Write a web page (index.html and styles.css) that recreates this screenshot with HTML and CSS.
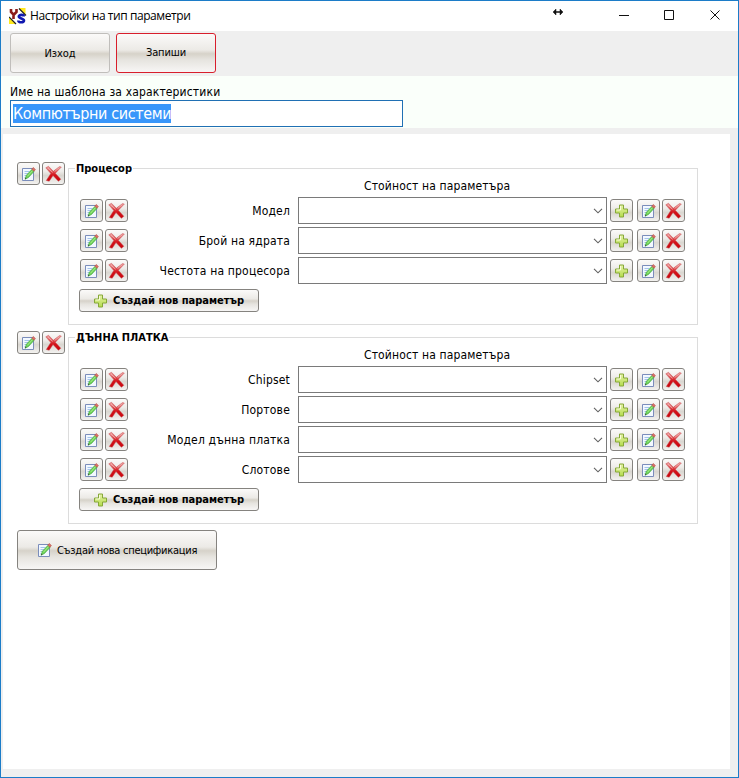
FILE: index.html
```html
<!DOCTYPE html>
<html lang="bg">
<head>
<meta charset="utf-8">
<title>Настройки на тип параметри</title>
<link rel="stylesheet" href="styles.css">
</head>
<body>
<svg class="defs" width="0" height="0">
  <defs>
    <linearGradient id="redFill" x1="0" y1="0" x2="0" y2="1"><stop offset="0" stop-color="#f0aaaa"/><stop offset=".4" stop-color="#dc3c40"/><stop offset=".6" stop-color="#d3121a"/><stop offset="1" stop-color="#c8050d"/></linearGradient>
    <linearGradient id="greenFill" x1="0" y1="0" x2="0" y2="1"><stop offset="0" stop-color="#e6f2a8"/><stop offset="1" stop-color="#b4dc4c"/></linearGradient>
    <symbol id="edit" viewBox="0 0 16 16">
      <path d="M1.500 2.500h11v12h-11z" fill="#f2f8ff" stroke="#7b8dbb"/>
      <path d="M3.500 5.500h5M3.500 7.500h4M3.500 9.500h3M3.500 11.500h2" stroke="#a4c3ea"/>
      <path d="M4 13.300l1.300-4L11 3.300l2.200 2-5.700 6.200z" fill="#66cf50" stroke="#4aa548" stroke-width=".6"/>
      <path d="M6.300 10.400l5.500-6" stroke="#b0ee96"/>
      <path d="M10.700 3.200l1.500-1.700 2.200 2L13 5.200z" fill="#dc7468" stroke="#b04a40" stroke-width=".6"/>
      <path d="M4 13.300l.5-1.600 1 .9z" fill="#333"/>
    </symbol>
    <symbol id="del" viewBox="0 0 18 18">
      <path d="M.8 2.800L3.500 1.300 8.300 6.300 14.500 1.600l1.800.5-6 6.200 5.500 6-2.400 2L8 10.500 4.200 16.200 1.300 15.500 5.800 8.500z" fill="url(#redFill)" stroke="#c4464a" stroke-width=".5"/>
      <path d="M2.800 3l4.800 4.300M14 2.800L9.500 6.700" stroke="#f3bcb9" stroke-width=".8"/>
    </symbol>
    <symbol id="plus" viewBox="0 0 14 14">
      <path d="M4.500 1h4v4h4v4h-4v4h-4V9h-4V5h4z" fill="url(#greenFill)" stroke="#86a838"/>
      <path d="M5.500 2v4h-4" fill="none" stroke="#f7fcd8"/>
    </symbol>
    <symbol id="chev" viewBox="0 0 10 6"><path d="M1 .8l4 4 4-4" fill="none" stroke="#606060" stroke-width="1.100"/></symbol>
  </defs>
</svg>
<div class="window">
  <header class="titlebar">
    <svg class="logo" width="18" height="17" viewBox="0 0 18 17">
      <path d="M10 0h6.500v7zM0 9l7 7H0z" fill="#ffe81e"/>
      <path d="M10 .5l7 7M0 9l7 7" stroke="#222" stroke-width="1.200"/>
      <path d="M2 1v3l2.500 2.500V11M7.500 1v3L5 6.500" fill="none" stroke="#8c1c1a" stroke-width="2.600"/>
      <path d="M14.800 8.500c0-2.200-5-2.200-5 0s5.200 1.700 5.200 4-5.700 2.500-5.700 0" fill="none" stroke="#1018b0" stroke-width="2.600"/>
    </svg>
    <span class="caption">Настройки на тип параметри</span>
    <svg class="resize" width="12" height="8" viewBox="0 0 12 8"><path d="M3 4h6" stroke="#111" stroke-width="1.500"/><path d="M1 4l3-3v6zM11 4L8 1v6z" fill="#111" stroke="#111" stroke-width=".5"/></svg>
    <svg class="controls" width="102" height="12" viewBox="0 0 102 12"><path d="M0 5.500h10M45.500 .5h9v9h-9zM91.500 .5l9 9M100.500 .5l-9 9" fill="none" stroke="#111" stroke-width="1"/></svg>
  </header>
  <div class="toolbar">
    <button class="btn tool">Изход</button>
    <button class="btn tool save">Запиши</button>
  </div>
  <div class="name">
    <label class="name-label">Име на шаблона за характеристики</label>
    <div class="name-input"><span class="selected">Компютърни системи</span></div>
  </div>
  <main class="sheet">
    <section class="group">
      <div class="pair"><button class="btn icon"><svg class="i16"><use href="#edit"/></svg></button><button class="btn icon"><svg class="i18"><use href="#del"/></svg></button></div>
      <fieldset>
        <legend>Процесор</legend>
        <div class="column-title">Стойност на параметъра</div>
        <div class="rows" data-labels="Модел|Брой на ядрата|Честота на процесора"></div>
        <button class="btn create"><svg class="i14"><use href="#plus"/></svg><span>Създай нов параметър</span></button>
      </fieldset>
    </section>
    <section class="group">
      <div class="pair"><button class="btn icon"><svg class="i16"><use href="#edit"/></svg></button><button class="btn icon"><svg class="i18"><use href="#del"/></svg></button></div>
      <fieldset>
        <legend>ДЪННА ПЛАТКА</legend>
        <div class="column-title">Стойност на параметъра</div>
        <div class="rows" data-labels="Chipset|Портове|Модел дънна платка|Слотове"></div>
        <button class="btn create"><svg class="i14"><use href="#plus"/></svg><span>Създай нов параметър</span></button>
      </fieldset>
    </section>
    <button class="btn spec"><svg class="i16"><use href="#edit"/></svg><span>Създай нова спецификация</span></button>
  </main>
</div>
<script src="script.js"></script>
</body>
</html>
```
FILE: script.js
```js
const iconButton = (name, size) =>
  `<button class="btn icon"><svg class="i${size}"><use href="#${name}"/></svg></button>`;
const pair = `<div class="pair">${iconButton('edit', 16)}${iconButton('del', 18)}</div>`;

document.querySelectorAll('.rows').forEach(list => {
  list.innerHTML = list.dataset.labels.split('|').map(label => `
    <div class="row">${pair}<span class="label">${label}</span>
      <div class="combo"><svg class="chev"><use href="#chev"/></svg></div>
      <div class="actions">${iconButton('plus', 14)}${pair}</div>
    </div>`).join('');
});
```
FILE: styles.css
```css
* { box-sizing: border-box; }
body { margin: 0; font: 12px "DejaVu Sans Condensed", "DejaVu Sans", sans-serif; font-stretch: condensed; color: #000; }
.defs { position: absolute; }
svg { display: block; flex: none; }
.window { width: 739px; height: 778px; border: 1px solid #1c7cc8; background: #efefef; display: flex; flex-direction: column; }
.titlebar { height: 30px; background: #fff; display: flex; align-items: center; padding: 0 17px 0 8px; }
.logo { margin-right: 3px; }
.caption { font: 12px "Open Sans", sans-serif; letter-spacing: -.43px; width: 522px; white-space: nowrap; padding-bottom: 1px; }
.resize { margin-bottom: 9px; }
.controls { margin-left: auto; }
.toolbar { height: 45px; padding: 2px 9px; display: flex; gap: 6px; }
.btn { display: flex; align-items: center; justify-content: center; padding: 0; margin: 0; border: 1px solid #85837f; border-radius: 3px; background: linear-gradient(#fbfaf9, #eceae6 42%, #d6d2c9 52%, #e6e4df 68%, #f7f6f5); color: #000; font: 11px "DejaVu Sans Condensed", "DejaVu Sans", sans-serif; font-stretch: condensed; white-space: nowrap; }
.tool { width: 100px; height: 40px; border-color: #c0bebb; letter-spacing: -.1px; }
.tool.save { border-color: #d81e2c; padding-bottom: 2px; }
.name { height: 52px; background: #fafffa; padding: 9px 9px 0; }
.name-label { display: block; height: 15px; line-height: 15px; letter-spacing: .15px; white-space: nowrap; }
.name-input { width: 393px; height: 27px; border: 1px solid #2070b4; background: #fff; padding: 3px 2px; }
.selected { display: inline-block; height: 19px; line-height: 19px; font-size: 16px; letter-spacing: -.38px; color: #fff; background: #3896fa; white-space: nowrap; }
.sheet { margin: 6px 8px 0 2px; height: 635px; background: #fff; padding: 28px 0 0 14px; }
.group { display: flex; gap: 3px; margin-bottom: 6px; }
.pair { display: flex; gap: 2px; }
.icon { width: 23px; height: 23px; background: linear-gradient(#fbfaf9, #eeece9 40%, #d9d6d0 60%, #f3f2f0); }
.i16 { width: 16px; height: 16px; }
.i18 { width: 18px; height: 18px; }
.i14 { width: 14px; height: 14px; }
fieldset { width: 630px; margin: 0; padding: 0 0 12px; border: 1px solid #dcdcdc; min-width: 0; }
legend { margin-left: 6px; padding: 0 1px; height: 13px; line-height: 14px; font-size: 11px; font-weight: bold; }
.column-title { height: 22px; line-height: 22px; padding-left: 295px; letter-spacing: .14px; }
.rows { display: flex; flex-direction: column; gap: 3px; padding-left: 11px; }
.row { display: flex; align-items: center; height: 27px; }
.label { width: 162px; text-align: right; margin-right: 8px; letter-spacing: .18px; white-space: nowrap; }
.combo { width: 309px; height: 27px; border: 1px solid #7a7a7a; display: flex; align-items: center; justify-content: flex-end; padding-right: 3px; background: #fff; }
.chev { width: 10px; height: 6px; }
.actions { display: flex; gap: 4px; margin-left: 3px; }
.create { width: 180px; height: 23px; margin: 5px 0 0 10px; gap: 5px; font-weight: bold; }
.spec { width: 200px; height: 40px; gap: 4px; letter-spacing: -.26px; }
```
